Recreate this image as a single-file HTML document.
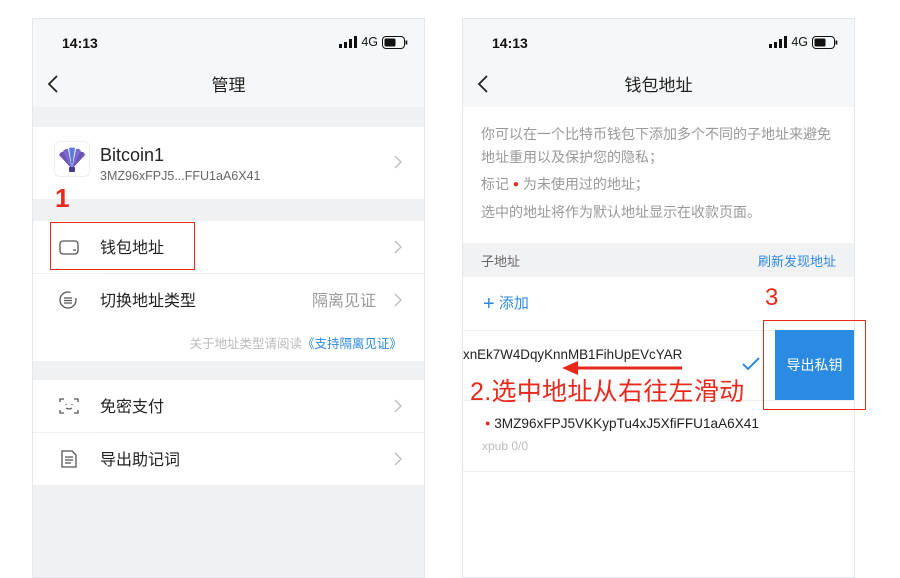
<!DOCTYPE html>
<html><head><meta charset="utf-8"><style>
*{margin:0;padding:0;box-sizing:border-box}
body{width:900px;height:571px;background:#fff;position:relative;overflow:hidden;font-family:"Liberation Sans","Noto Sans CJK SC",sans-serif;color:#222}
.ph{position:absolute;top:18px;width:393px;height:560px;border:1px solid #e3e6ea;background:#eff1f3;overflow:hidden}
.abs{position:absolute}
.hdr{position:absolute;left:0;top:0;width:100%;height:88px;background:#f6f7f8}
.time{position:absolute;left:29px;top:16px;font-size:14px;font-weight:bold;color:#111}
.sig{position:absolute;right:16px;top:16px;font-size:12.5px;color:#111;display:flex;align-items:center;gap:4px}
.title{position:absolute;width:100%;top:52px;text-align:center;font-size:17px;color:#222}
.back{position:absolute;left:14px;top:55px}
.row{position:absolute;left:0;width:100%;background:#fff}
.lbl{position:absolute;left:67px;font-size:16px;color:#222}
.chev{position:absolute;right:22px}
.red{color:#e8291c}
</style></head><body>

<!-- LEFT PHONE -->
<div class="ph" style="left:32px">
  <div class="hdr"></div>
  <div class="time">14:13</div>
  <div class="sig"><svg width="18" height="12"><rect x="0" y="8" width="3" height="4" fill="#111"/><rect x="5" y="6" width="3" height="6" fill="#111"/><rect x="10" y="3" width="3" height="9" fill="#111"/><rect x="15" y="0" width="3" height="12" fill="#111"/></svg>4G<svg width="26" height="13"><rect x="0.5" y="0.5" width="22" height="12" rx="3.5" fill="none" stroke="#111"/><rect x="2.5" y="2.5" width="11" height="8" rx="1.5" fill="#111"/><rect x="23.5" y="4.5" width="1.8" height="4" fill="#111"/></svg></div>
  <svg class="back" width="12" height="20"><path d="M10 2 L2 10 L10 18" fill="none" stroke="#222" stroke-width="1.8"/></svg>
  <div class="title">管理</div>

  <div class="row" style="top:108px;height:72px">
    <div class="abs" style="left:21px;top:14px;width:36px;height:36px;border:1px solid #eee;border-radius:6px;background:#fff"></div>
    <svg class="abs" style="left:24px;top:20px" width="30" height="26"><g fill="#6a55b8"><path d="M15 22 L2 8 Q4 4 7 5 Z"/><path d="M15 22 L6 4 Q9 1 11 2 Z" fill="#7a6ad0"/><path d="M15 22 L12 1 Q15 0 18 1 Z" fill="#5a7ee0"/><path d="M15 22 L19 2 Q22 1 24 4 Z" fill="#7a6ad0"/><path d="M15 22 L23 5 Q27 4 28 8 Z"/><rect x="12" y="20" width="6" height="5" rx="1" fill="#4a3a8a"/></g></svg>
    <div class="abs" style="left:67px;top:18px;font-size:18px">Bitcoin1</div>
    <div class="abs" style="left:67px;top:42px;font-size:12.5px;color:#666">3MZ96xFPJ5...FFU1aA6X41</div>
    <svg class="chev" style="top:28px" width="8" height="14"><path d="M1 1 L7 7 L1 13" fill="none" stroke="#bbb" stroke-width="1.3"/></svg>
  </div>
  <div class="abs red" style="left:22px;top:166px;font-size:26px;font-weight:bold;line-height:1">1</div>

  <div class="row" style="top:202px;height:52px">
    <svg class="abs" style="left:26px;top:19px" width="20" height="15"><rect x="1" y="1" width="18" height="13" rx="3" fill="none" stroke="#555" stroke-width="1.3"/><path d="M14 10h3" stroke="#555" stroke-width="1.3"/></svg>
    <div class="lbl" style="top:13px">钱包地址</div>
    <svg class="chev" style="top:19px" width="8" height="14"><path d="M1 1 L7 7 L1 13" fill="none" stroke="#bbb" stroke-width="1.3"/></svg>
  </div>
  <div class="abs" style="left:67px;top:254px;width:326px;height:1px;background:#eee"></div>
  <div class="row" style="top:255px;height:87px">
    <svg class="abs" style="left:25px;top:17px" width="22" height="18"><circle cx="10" cy="9" r="8" fill="none" stroke="#555" stroke-width="1.3" stroke-dasharray="40 8"/><path d="M6 7h8M6 9.5h8M6 12h8" stroke="#555" stroke-width="1.2"/></svg>
    <div class="lbl" style="top:13px">切换地址类型</div>
    <div class="abs" style="right:48px;top:13px;font-size:16px;color:#999">隔离见证</div>
    <svg class="chev" style="top:19px" width="8" height="14"><path d="M1 1 L7 7 L1 13" fill="none" stroke="#bbb" stroke-width="1.3"/></svg>
    <div class="abs" style="right:22px;top:59px;font-size:12.5px;color:#bbb">关于地址类型请阅读<span style="color:#2e8ae0">《支持隔离见证》</span></div>
  </div>

  <div class="row" style="top:361px;height:52px">
    <svg class="abs" style="left:26px;top:17px" width="20" height="18" fill="none" stroke="#555" stroke-width="1.3"><path d="M1 5V2h4M15 2h4v3M19 13v3h-4M5 16H1v-3"/><path d="M7 7v1M13 7v1M7 11q3 2 6 0"/></svg>
    <div class="lbl" style="top:13px">免密支付</div>
    <svg class="chev" style="top:19px" width="8" height="14"><path d="M1 1 L7 7 L1 13" fill="none" stroke="#bbb" stroke-width="1.3"/></svg>
  </div>
  <div class="abs" style="left:67px;top:413px;width:326px;height:1px;background:#eee"></div>
  <div class="row" style="top:414px;height:52px">
    <svg class="abs" style="left:27px;top:16px" width="18" height="20" fill="none" stroke="#555" stroke-width="1.3"><path d="M2 2h10l4 4v12H2z"/><path d="M5 8h8M5 11h8M5 14h6"/></svg>
    <div class="lbl" style="top:13px">导出助记词</div>
    <svg class="chev" style="top:19px" width="8" height="14"><path d="M1 1 L7 7 L1 13" fill="none" stroke="#bbb" stroke-width="1.3"/></svg>
  </div>
</div>
<div class="abs" style="left:50px;top:222px;width:145px;height:48px;border:1.5px solid #e8291c"></div>

<!-- RIGHT PHONE -->
<div class="ph" style="left:462px;background:#fff">
  <div class="hdr"></div>
  <div class="time">14:13</div>
  <div class="sig"><svg width="18" height="12"><rect x="0" y="8" width="3" height="4" fill="#111"/><rect x="5" y="6" width="3" height="6" fill="#111"/><rect x="10" y="3" width="3" height="9" fill="#111"/><rect x="15" y="0" width="3" height="12" fill="#111"/></svg>4G<svg width="26" height="13"><rect x="0.5" y="0.5" width="22" height="12" rx="3.5" fill="none" stroke="#111"/><rect x="2.5" y="2.5" width="11" height="8" rx="1.5" fill="#111"/><rect x="23.5" y="4.5" width="1.8" height="4" fill="#111"/></svg></div>
  <svg class="back" width="12" height="20"><path d="M10 2 L2 10 L10 18" fill="none" stroke="#222" stroke-width="1.8"/></svg>
  <div class="title">钱包地址</div>

  <div class="abs" style="left:18px;top:104px;font-size:14px;color:#999;line-height:23px;width:372px">你可以在一个比特币钱包下添加多个不同的子地址来避免<br>地址重用以及保护您的隐私；</div>
  <div class="abs" style="left:18px;top:155px;font-size:14px;color:#999">标记 <span style="color:#e8291c;font-size:10px;vertical-align:2px">●</span> 为未使用过的地址；</div>
  <div class="abs" style="left:18px;top:183px;font-size:14px;color:#999">选中的地址将作为默认地址显示在收款页面。</div>

  <div class="abs" style="left:0;top:224px;width:100%;height:34px;background:#f1f2f4"></div>
  <div class="abs" style="left:18px;top:232px;font-size:13px;color:#666">子地址</div>
  <div class="abs" style="right:18px;top:232px;font-size:13px;color:#2e8ae0">刷新发现地址</div>

  <div class="abs" style="left:20px;top:273px;font-size:15px;color:#2e8ae0"><span style="font-size:20px;vertical-align:-2px">+</span> 添加</div>
  <div class="abs" style="left:0;top:311px;width:100%;height:1px;background:#eee"></div>

  <div class="abs" style="left:0;top:328px;font-size:13.4px;color:#222">xnEk7W4DqyKnnMB1FihUpEVcYAR</div>
  <svg class="abs" style="left:279px;top:338px" width="18" height="14"><path d="M1 7 L6 12 L17 1" fill="none" stroke="#2e8ae0" stroke-width="2"/></svg>
  <div class="abs" style="left:312px;top:311px;width:79px;height:70px;background:#2b8be3;color:#fff;font-size:14px;text-align:center;line-height:70px">导出私钥</div>
  <div class="abs" style="left:0;top:381px;width:100%;height:1px;background:#f0f0f0"></div>

  <div class="abs" style="left:22px;top:397px;font-size:13.6px;color:#222"><span style="color:#e8291c;font-size:9px;vertical-align:2px">●</span> 3MZ96xFPJ5VKKypTu4xJ5XfiFFU1aA6X41</div>
  <div class="abs" style="left:19px;top:420px;font-size:12px;color:#bbb">xpub 0/0</div>
  <div class="abs" style="left:0;top:452px;width:100%;height:1px;background:#eee"></div>
</div>

<!-- annotations -->
<div class="abs red" style="left:765px;top:286px;font-size:24px;line-height:1">3</div>
<div class="abs" style="left:763px;top:320px;width:103px;height:90px;border:1.5px solid #e8291c"></div>
<svg class="abs" style="left:560px;top:360px" width="125" height="16"><path d="M16 8 H122" stroke="#e8291c" stroke-width="3"/><path d="M2 8 L18 1 L18 15 Z" fill="#e8291c"/></svg>
<div class="abs red" style="left:470px;top:377px;font-size:25px;line-height:30px;letter-spacing:0.3px">2.选中地址从右往左滑动</div>
</body></html>
